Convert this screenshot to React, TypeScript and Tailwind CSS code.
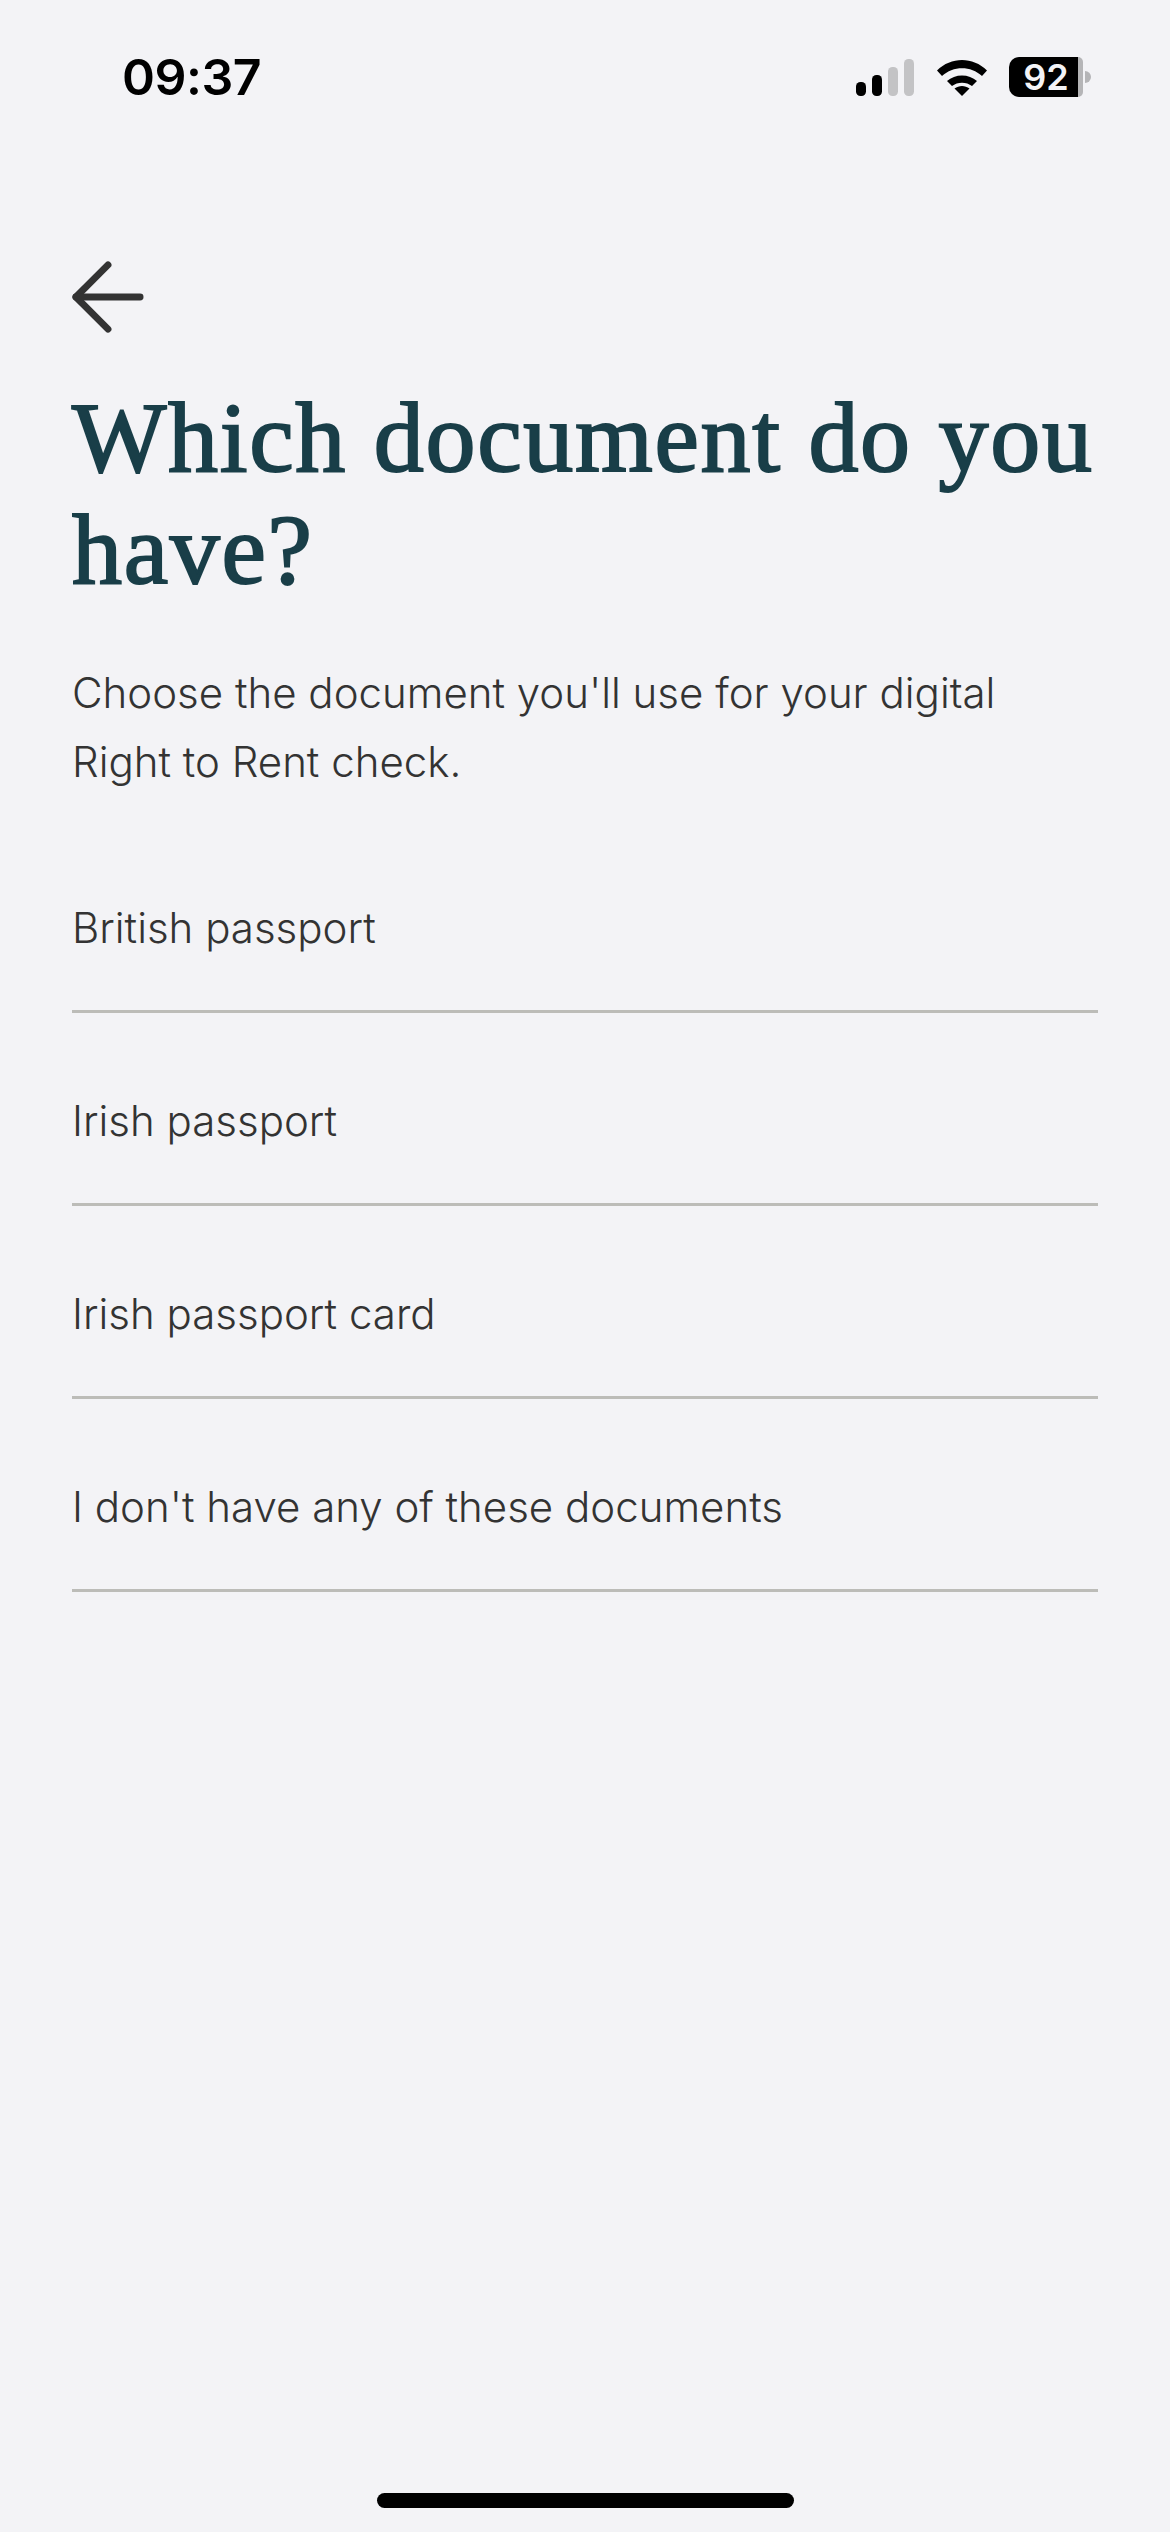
import { ArrowLeft } from "lucide-react";

const options = [
  "British passport",
  "Irish passport",
  "Irish passport card",
  "I don't have any of these documents",
];

function StatusIcons() {
  return (
    <div className="flex items-center">
      <svg width="58" height="37" viewBox="0 0 58 37">
        <rect x="0" y="23" width="10" height="14" rx="4.5" fill="#000" />
        <rect x="16" y="16" width="10" height="21" rx="4.5" fill="#000" />
        <rect x="32" y="8" width="10" height="29" rx="4.5" fill="#c3c3c5" />
        <rect x="48" y="0" width="10" height="37" rx="4.5" fill="#c3c3c5" />
      </svg>
      <svg className="ml-[22px]" width="52" height="37" viewBox="0 0 52 37">
        <path d="M1 11.5C15 -2.5 37 -2.5 51 11.5L46 17C35 6.5 17 6.5 6 17Z" fill="#000" />
        <path d="M11 22C19 14.5 33 14.5 41 22L36 27C30.500 22.500 21.500 22.500 16 27Z" fill="#000" />
        <path d="M18.500 29.500C23 26 29 26 33.500 29.500L26 37Z" fill="#000" />
      </svg>
      <div className="ml-[21px] flex items-center">
        <div className="flex h-[40px] w-[69px] items-center justify-center rounded-l-[10px] bg-black pl-[5px]">
          <span className="font-['Inter',sans-serif] text-[36px] font-semibold leading-none text-[#f3f3f6]">92</span>
        </div>
        <div className="h-[40px] w-[5px] rounded-r-[6px] bg-[#b5b5b7]" />
        <div className="ml-[2px] h-[12px] w-[6px] rounded-r-full bg-[#b5b5b7]" />
      </div>
    </div>
  );
}

export default function App() {
  return (
    <main className="relative flex h-[2532px] w-[1170px] flex-col bg-[#f3f3f6]">
      <div className="flex h-[154px] items-center justify-between pl-[122px] pr-[79px]">
        <span className="font-['Inter',sans-serif] text-[50px] font-semibold leading-none tracking-[-0.5px] text-black">09:37</span>
        <StatusIcons />
      </div>

      <div className="flex flex-col px-[72px]">
        <ArrowLeft size={110} strokeWidth={1.5} className="ml-[-19px] mt-[88px] text-[#333333]" />
        <h1 className="mt-[30px] font-['Liberation_Serif',serif] text-[100px] font-normal leading-[112px] tracking-[1.7px] text-[#193e48] [-webkit-text-stroke:2px_#193e48]">
          Which document do you have?
        </h1>
        <p className="mt-[52px] w-[1000px] font-['Inter',sans-serif] text-[42px] font-light leading-[69px] text-[#333333]">
          Choose the document you'll use for your digital Right to Rent check.
        </p>
        <ul className="mt-[24px] flex w-[1026px] flex-col">
          {options.map((option) => (
            <li
              key={option}
              className="flex h-[193px] items-start border-b-[3px] border-[#bcbcb8] pt-[74px] font-['Inter',sans-serif] text-[42px] font-light leading-[68px] text-[#333333]"
            >
              {option}
            </li>
          ))}
        </ul>
      </div>

      <div className="absolute bottom-[24px] left-[377px] h-[15px] w-[417px] rounded-[8px] bg-black" />
    </main>
  );
}
